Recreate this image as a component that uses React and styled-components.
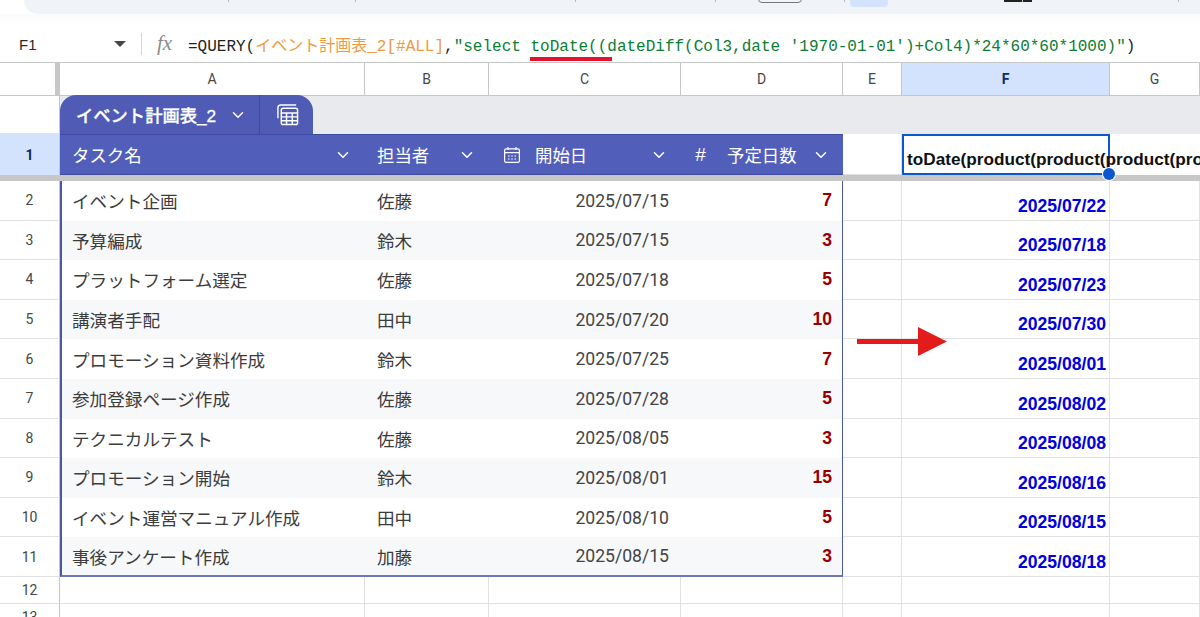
import { ChevronDown } from "lucide-react";
import styled, { createGlobalStyle } from "styled-components";

const COLUMNS = ["A", "B", "C", "D", "E", "F", "G"];

const TASKS = [
  ["イベント企画", "佐藤", "2025/07/15", 7, "2025/07/22"],
  ["予算編成", "鈴木", "2025/07/15", 3, "2025/07/18"],
  ["プラットフォーム選定", "佐藤", "2025/07/18", 5, "2025/07/23"],
  ["講演者手配", "田中", "2025/07/20", 10, "2025/07/30"],
  ["プロモーション資料作成", "鈴木", "2025/07/25", 7, "2025/08/01"],
  ["参加登録ページ作成", "佐藤", "2025/07/28", 5, "2025/08/02"],
  ["テクニカルテスト", "佐藤", "2025/08/05", 3, "2025/08/08"],
  ["プロモーション開始", "鈴木", "2025/08/01", 15, "2025/08/16"],
  ["イベント運営マニュアル作成", "田中", "2025/08/10", 5, "2025/08/15"],
  ["事後アンケート作成", "加藤", "2025/08/15", 3, "2025/08/18"],
];

export default function App() {
  return (
    <Page>
      <GlobalStyle />
      <Toolbar>
        <ToolbarMark $left={228} />
        <ToolbarMark $left={355} />
        <ToolbarMark $left={575} />
        <ToolbarMark $left={715} />
        <ToolbarButton />
        <ToolbarMark $left={844} />
        <ToolbarChip />
        <ToolbarSwatch />
        <ToolbarMark $left={1022} />
        <ToolbarMark $left={1178} />
      </Toolbar>
      <ToolbarFade />

      <FormulaBar>
        <CellName>F1</CellName>
        <Caret />
        <FormulaDivider />
        <FxIcon viewBox="0 0 20 24">
          <text x="0" y="18" fontFamily="Liberation Serif" fontStyle="italic" fontSize="21" fill="#8b8b8b">
            fx
          </text>
        </FxIcon>
        <Formula>
          =QUERY(<Ref>イベント計画表_2[#ALL]</Ref>,<Str>"select <Marked>toDate(</Marked>(dateDiff(Col3,date '1970-01-01')+Col4)*24*60*60*1000)"</Str>)
        </Formula>
      </FormulaBar>

      <ColumnHeaderRow>
        <Corner />
        {COLUMNS.map((c) => (
          <ColumnHeader key={c} $active={c === "F"}>
            {c}
          </ColumnHeader>
        ))}
      </ColumnHeaderRow>

      <TabRow>
        <RowHead $tall />
        <TabBand>
          <TableTab>
            <TabName>イベント計画表_2</TabName>
            <TabChevron size={18} strokeWidth={2} />
            <TabDivider />
            <TabIcon viewBox="0 0 24 24" fill="none" stroke="#fff" strokeWidth="1.5">
              <path d="M2 16V5a3 3 0 0 1 3-3h16" />
              <rect x="5.5" y="5.5" width="17" height="17" rx="2" />
              <path d="M5.5 10.5h17M5.5 14.5h17M5.5 18.5h17M11 10.5v12M17 10.5v12" />
            </TabIcon>
          </TableTab>
        </TabBand>
      </TabRow>

      <HeaderRow>
        <RowHead $active>1</RowHead>
        <HeadCell>
          <HeadLabel>タスク名</HeadLabel>
          <HeadChevron size={18} strokeWidth={2} />
        </HeadCell>
        <HeadCell>
          <HeadLabel>担当者</HeadLabel>
          <HeadChevron size={18} strokeWidth={2} />
        </HeadCell>
        <HeadCell $wide>
          <CalendarIcon viewBox="0 0 18 18" fill="none" stroke="#fff" strokeWidth="1.2">
            <rect x="1.6" y="2.8" width="14.8" height="13.6" rx="1.6" />
            <path d="M1.6 6.6h14.8M5 1v3M13 1v3" />
            <path d="M5 10h1.6M8.2 10h1.6M11.4 10h1.6M5 13h1.6M8.2 13h1.6M11.4 13h1.6" />
          </CalendarIcon>
          <HeadLabel>開始日</HeadLabel>
          <HeadChevron size={18} strokeWidth={2} />
        </HeadCell>
        <HeadCell $wide>
          <HashMark>#</HashMark>
          <HeadLabel>予定日数</HeadLabel>
          <HeadChevron size={18} strokeWidth={2} />
        </HeadCell>
        <PlainCell />
        <SelectedCell>
          <Overflowing>toDate(product(product(product(product(product(</Overflowing>
          <Handle />
        </SelectedCell>
        <HeaderBlank />
      </HeaderRow>

      <FreezeBar />

      {TASKS.map((t, i) => {
        const band = i % 2 === 1;
        const last = i === TASKS.length - 1;
        return (
          <DataRow key={t[0]}>
            <RowHead>{i + 2}</RowHead>
            <NameCell $band={band} $last={last}>{t[0]}</NameCell>
            <TableCell $band={band} $last={last}>{t[1]}</TableCell>
            <DateCell $band={band} $last={last}>{t[2]}</DateCell>
            <DaysCell $band={band} $last={last}>{t[3]}</DaysCell>
            <PlainCell />
            <ResultCell>{t[4]}</ResultCell>
            <PlainCell />
          </DataRow>
        );
      })}

      {[12, 13].map((n) => (
        <EmptyRow key={n}>
          <RowHead>{n}</RowHead>
          {COLUMNS.map((c) => (
            <PlainCell key={c} />
          ))}
        </EmptyRow>
      ))}

      <Arrow viewBox="0 0 90 30">
        <path d="M0 12h61V0l29 14.500-29 14.500V17H0z" fill="#e31b1b" />
      </Arrow>
    </Page>
  );
}

const GlobalStyle = createGlobalStyle`
  html, body {
    margin: 0;
    padding: 0;
    background: #fff;
  }
  * {
    box-sizing: border-box;
  }
`;

const GRID = "60px 305px 124px 192px 162px 59px 208px 90px";
const SANS = `"Liberation Sans", "Noto Sans CJK JP", sans-serif`;
const LINE = "#e1e1e1";
const HEAD_LINE = "#c4c7c5";
const INDIGO = "#525fba";

const Page = styled.div`
  position: relative;
  width: 1200px;
  height: 617px;
  overflow: hidden;
  background: #fff;
  font-family: ${SANS};
  color: #3c3c3c;
`;

const Toolbar = styled.div`
  position: relative;
  height: 14px;
  margin-left: 24px;
  background: #f0f4f9;
  border-bottom-left-radius: 14px;
`;

const ToolbarMark = styled.div`
  position: absolute;
  top: 0;
  left: ${(p) => p.$left - 24}px;
  width: 1px;
  height: 2px;
  background: #b9bcc0;
`;

const ToolbarButton = styled.div`
  position: absolute;
  top: -6px;
  left: 734px;
  width: 44px;
  height: 9px;
  border: 1px solid #74777b;
  border-radius: 4px;
`;

const ToolbarChip = styled.div`
  position: absolute;
  top: -4px;
  left: 826px;
  width: 38px;
  height: 11px;
  border-radius: 4px;
  background: #d3e3fd;
`;

const ToolbarSwatch = styled.div`
  position: absolute;
  top: 0;
  left: 980px;
  width: 28px;
  height: 2px;
  background: #222;
`;

const ToolbarFade = styled.div`
  height: 12px;
  background: linear-gradient(#f9fbfd, #fff);
`;

const FormulaBar = styled.div`
  display: flex;
  align-items: center;
  height: 37px;
  border-bottom: 1px solid ${HEAD_LINE};
`;

const CellName = styled.div`
  width: 114px;
  padding-left: 19px;
  font-size: 15px;
  color: #2b2b2b;
`;

const Caret = styled.div`
  width: 0;
  height: 0;
  border-left: 6px solid transparent;
  border-right: 6px solid transparent;
  border-top: 6px solid #444746;
`;

const FormulaDivider = styled.div`
  width: 1px;
  height: 22px;
  margin-left: 15px;
  background: #d5d7da;
`;

const FxIcon = styled.svg`
  width: 20px;
  height: 24px;
  margin-left: 15px;
`;

const Formula = styled.div`
  margin-left: 11px;
  font-family: "Liberation Mono", "Noto Sans CJK JP", monospace;
  font-size: 16px;
  white-space: pre;
  color: #1f1f1f;
`;

const Ref = styled.span`
  color: #f09a3e;
`;

const Str = styled.span`
  color: #0b7d34;
`;

const Marked = styled.span`
  position: relative;
  &::after {
    content: "";
    position: absolute;
    left: 0;
    right: -14px;
    bottom: -5px;
    height: 4px;
    background: #e0142a;
  }
`;

const ColumnHeaderRow = styled.div`
  display: grid;
  grid-template-columns: ${GRID};
  height: 33px;
  border-bottom: 1px solid ${HEAD_LINE};
`;

const Corner = styled.div`
  margin-left: 55px;
  background: #c7c7c7;
`;

const ColumnHeader = styled.div`
  display: flex;
  align-items: center;
  justify-content: center;
  border-right: 1px solid ${HEAD_LINE};
  font-family: Roboto, sans-serif;
  font-size: 14px;
  font-weight: ${(p) => (p.$active ? 700 : 400)};
  color: ${(p) => (p.$active ? "#0b2a6b" : "#444746")};
  background: ${(p) => (p.$active ? "#d3e3fd" : "#fff")};
`;

const RowHead = styled.div`
  display: flex;
  align-items: center;
  justify-content: center;
  border-right: 1px solid ${HEAD_LINE};
  border-bottom: ${(p) => (p.$active ? "none" : `1px solid ${LINE}`)};
  font-family: Roboto, sans-serif;
  font-size: 14px;
  font-weight: ${(p) => (p.$active ? 700 : 400)};
  color: ${(p) => (p.$active ? "#0b2a6b" : "#444746")};
  background: ${(p) => (p.$active ? "#d3e3fd" : "#fff")};
`;

const TabRow = styled.div`
  display: grid;
  grid-template-columns: 60px 1fr;
  height: 38px;
`;

const TabBand = styled.div`
  display: flex;
  align-items: flex-end;
  background: #e8eaed;
`;

const TableTab = styled.div`
  display: flex;
  align-items: center;
  width: 253px;
  height: 39px;
  margin-top: -1px;
  padding-left: 16px;
  border-radius: 16px 16px 0 0;
  background: #4f5bb5;
  color: #fff;
`;

const TabName = styled.span`
  font-size: 17.3px;
  font-weight: 500;
  -webkit-text-stroke: 0.3px #fff;
`;

const TabChevron = styled(ChevronDown)`
  margin-left: 13px;
  color: #fff;
`;

const TabDivider = styled.div`
  align-self: stretch;
  width: 1px;
  margin-left: 12px;
  background: #3f4a9e;
`;

const TabIcon = styled.svg`
  width: 23px;
  height: 23px;
  margin-left: 16px;
`;

const HeaderRow = styled.div`
  display: grid;
  grid-template-columns: ${GRID};
  height: 41px;
`;

const HeadCell = styled.div`
  display: flex;
  align-items: center;
  padding: 0 13px 0 ${(p) => (p.$wide ? 14 : 12)}px;
  border-top: 1px solid #3f4aa3;
  border-bottom: 1px solid #3f4aa3;
  background: ${INDIGO};
  color: #fff;
`;

const HeadLabel = styled.span`
  font-size: 17.4px;
`;

const HeadChevron = styled(ChevronDown)`
  margin-left: auto;
  color: #fff;
`;

const CalendarIcon = styled.svg`
  width: 18px;
  height: 18px;
  margin-right: 14px;
`;

const HashMark = styled.span`
  width: 15px;
  margin-right: 17px;
  font-family: "Liberation Sans", sans-serif;
  font-size: 19px;
  font-style: italic;
`;

const PlainCell = styled.div`
  border-right: 1px solid ${LINE};
  border-bottom: 1px solid ${LINE};
`;

const SelectedCell = styled.div`
  position: relative;
  display: flex;
  align-items: flex-end;
  padding: 0 0 3px 3px;
  border: 2px solid #0b57d0;
  white-space: nowrap;
`;

const Overflowing = styled.span`
  font-size: 17.2px;
  font-weight: 700;
  color: #111;
`;

const Handle = styled.div`
  position: absolute;
  right: -7px;
  bottom: -7px;
  width: 12px;
  height: 12px;
  border-radius: 50%;
  background: #0b57d0;
  box-shadow: 0 0 0 1px #fff;
`;

const HeaderBlank = styled.div``;

const FreezeBar = styled.div`
  height: 6px;
  background: #c7c7c7;
`;

const DataRow = styled.div`
  display: grid;
  grid-template-columns: ${GRID};
  height: 39.6px;
`;

const EmptyRow = styled.div`
  display: grid;
  grid-template-columns: ${GRID};
  height: 27px;
`;

const TableCell = styled.div`
  display: flex;
  align-items: center;
  padding: 0 12px;
  font-size: 17.6px;
  white-space: nowrap;
  background: ${(p) => (p.$band ? "#f6f8f9" : "#fff")};
  border-bottom: ${(p) => (p.$last ? "2px solid #6e78b6" : "none")};
`;

const NameCell = styled(TableCell)`
  border-left: 2px solid #4b57a6;
  padding-left: 10px;
`;

const DateCell = styled(TableCell)`
  justify-content: flex-end;
  font-family: Roboto, sans-serif;
  color: #444;
`;

const DaysCell = styled(TableCell)`
  justify-content: flex-end;
  padding-right: 10px;
  border-right: 1px solid #4b57a6;
  font-family: "Liberation Sans", sans-serif;
  font-weight: 700;
  color: #980000;
`;

const ResultCell = styled(PlainCell)`
  display: flex;
  align-items: flex-end;
  justify-content: flex-end;
  padding: 0 3px 3px 0;
  font-size: 17.6px;
  font-weight: 700;
  color: #0000e0;
`;

const Arrow = styled.svg`
  position: absolute;
  left: 857px;
  top: 327px;
  width: 90px;
  height: 30px;
`;
